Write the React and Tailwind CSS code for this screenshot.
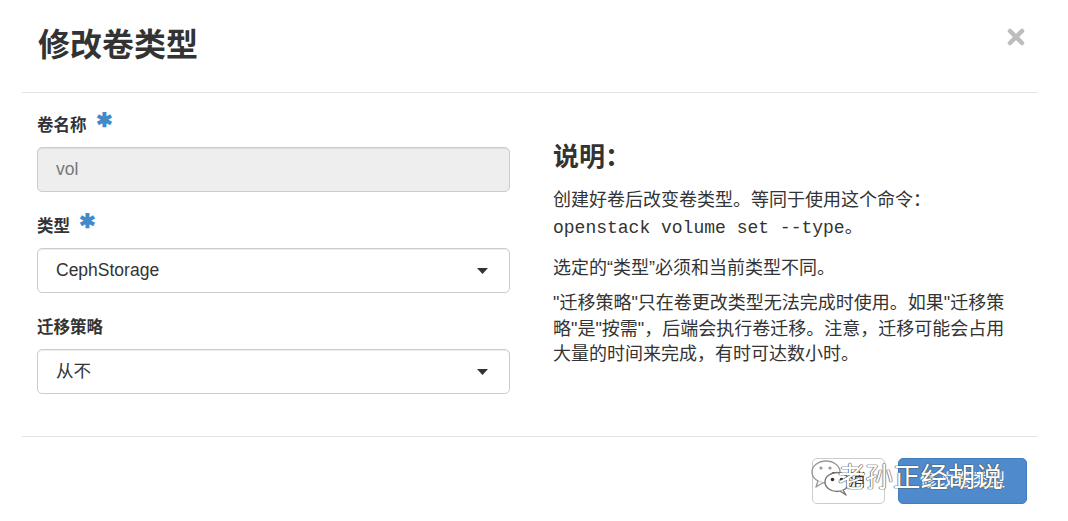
import { useState } from 'react';

const Caret = () => (
  <svg width="11" height="6" viewBox="0 0 11 6" className="shrink-0">
    <path d="M0 0 H11 L5.5 6 Z" fill="#333" />
  </svg>
);

const Field = ({ label, required, children }) => (
  <div className="flex flex-col">
    <div className="flex items-start h-[24px] mb-[10px]">
      <span className="text-[16.5px] leading-[24px] font-bold text-[#333]">{label}</span>
      {required && (
        <span className="ml-[9px] -mt-[3px] text-[#428bca] text-[20px] leading-[20px] font-bold">✱</span>
      )}
    </div>
    {children}
  </div>
);

const Select = ({ value }) => (
  <div className="h-[45px] flex items-center justify-between pl-[18px] pr-[21px] border border-[#ccc] rounded-[5px] bg-white shadow-[inset_0_1px_1px_rgba(0,0,0,0.075)]">
    <span className="text-[17.5px] text-[#333]">{value}</span>
    <Caret />
  </div>
);

const WeChatMark = () => (
  <div className="absolute left-[810px] top-[458px] flex items-center pointer-events-none">
    <svg width="44" height="40" viewBox="0 0 44 40">
      <ellipse cx="16" cy="14" rx="14" ry="11" fill="none" stroke="#999" strokeWidth="1.4" />
      <path d="M8 23 L6 29 L13 24.5" fill="white" stroke="#999" strokeWidth="1.4" strokeLinejoin="round" />
      <circle cx="11" cy="10" r="1.6" fill="#999" />
      <circle cx="20" cy="10" r="1.6" fill="#999" />
      <ellipse cx="27" cy="24" rx="12" ry="9.5" fill="white" stroke="#777" strokeWidth="1.4" />
      <path d="M33 32 L36 37 L30 33" fill="white" stroke="#777" strokeWidth="1.4" strokeLinejoin="round" />
      <circle cx="22.5" cy="21.5" r="1.8" fill="#333" />
      <circle cx="31.5" cy="21.5" r="1.8" fill="#333" />
    </svg>
    <span className="-ml-[16px] text-[27.5px] leading-[32px] text-white [text-shadow:0_0_1px_#444,0_0_1px_#444,0_0_1px_#444]">
      老孙正经胡说
    </span>
  </div>
);

export default function App() {
  const [volType] = useState('CephStorage');
  const [policy] = useState('从不');

  return (
    <div className="relative w-[1068px] h-[521px] bg-white overflow-hidden font-['Liberation_Sans','Noto_Sans_CJK_SC',sans-serif] text-[#333]">
      <div className="ml-[22px] w-[1016px]">
        {/* Header */}
        <div className="h-[93px] flex items-start justify-between pl-[16px] pr-[13px] pt-[25px] border-b border-[#e5e5e5]">
          <h4 className="text-[32px] leading-[40px] font-bold text-[#333]">修改卷类型</h4>
          <svg width="18" height="18" viewBox="0 0 18 18" className="mt-[3px]">
            <path d="M3 3 L15 15 M15 3 L3 15" stroke="#bdbdbd" strokeWidth="4.5" strokeLinecap="round" />
          </svg>
        </div>

        {/* Body */}
        <div className="h-[343px] flex px-[15px] pt-[20px]">
          <div className="w-[473px] flex flex-col gap-[22px]">
            <Field label="卷名称" required>
              <div className="h-[45px] flex items-center pl-[18px] border border-[#ccc] rounded-[5px] bg-[#eee] shadow-[inset_0_1px_1px_rgba(0,0,0,0.075)]">
                <span className="text-[17.5px] text-[#777]">vol</span>
              </div>
            </Field>
            <Field label="类型" required>
              <Select value={volType} />
            </Field>
            <Field label="迁移策略">
              <Select value={policy} />
            </Field>
          </div>

          <div className="ml-[43px] w-[466px] pt-[27px] text-[18px] text-[#333]">
            <h3 className="text-[26px] leading-[34px] font-bold mb-[13px]">说明：</h3>
            <p className="leading-[27px]">
              创建好卷后改变卷类型。等同于使用这个命令：
              <br />
              <span className="font-['Liberation_Mono','Noto_Sans_CJK_SC',monospace] text-[18px]">openstack volume set --type</span>。
            </p>
            <p className="leading-[26px] mt-[13px]">选定的“类型”必须和当前类型不同。</p>
            <p className="leading-[25.5px] mt-[10px]">
              "迁移策略"只在卷更改类型无法完成时使用。如果"迁移策略"是"按需"，后端会执行卷迁移。注意，迁移可能会占用大量的时间来完成，有时可达数小时。
            </p>
          </div>
        </div>

        {/* Footer */}
        <div className="border-t border-[#e5e5e5] flex justify-end gap-[13px] pt-[21px] pr-[11px]">
          <button className="h-[46px] w-[73px] border border-[#ccc] rounded-[5px] bg-white text-[17px] text-[#333]">
            取消
          </button>
          <button className="h-[46px] w-[129px] border border-[#3f7fc0] rounded-[5px] bg-[#4f8bcc] text-[17px] text-white">
            修改卷类型
          </button>
        </div>
      </div>

      <WeChatMark />
    </div>
  );
}
